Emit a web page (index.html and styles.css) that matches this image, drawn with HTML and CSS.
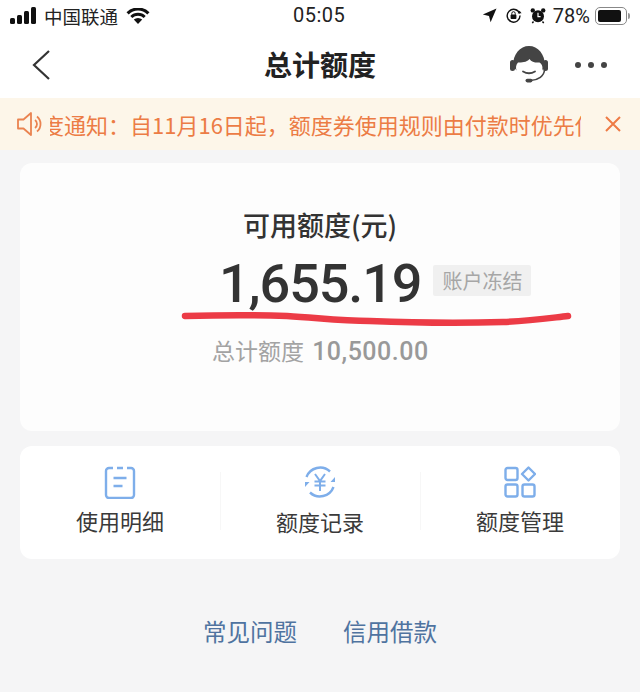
FILE: index.html
```html
<!DOCTYPE html>
<html lang="zh-CN">
<head>
  <meta charset="UTF-8">
  <title>总计额度</title>
  <link rel="stylesheet" href="styles.css">
</head>
<body>
  <div class="status-bar">
    <div class="status-left">
      <div class="signal"><i></i><i></i><i></i><i></i></div>
      <span>中国联通</span>
      <svg class="wifi" width="24" height="16" viewBox="0 0 24 16">
        <path d="M12 16 7.800 11.600a6 6 0 0 1 8.400 0z" fill="#111"/>
        <path d="M4.300 8a11 11 0 0 1 15.400 0l-2 2.100a8.200 8.200 0 0 0-11.400 0z" fill="#111"/>
        <path d="M.5 4.200a16.400 16.400 0 0 1 23 0l-2.200 2.200a13.300 13.300 0 0 0-18.600 0z" fill="#111"/>
      </svg>
    </div>
    <div class="status-time">05:05</div>
    <div class="status-right">
      <svg width="15" height="15" viewBox="0 0 15 15"><path d="M14.500.5 8.600 14.200 7 8 .8 6.400z" fill="#111"/></svg>
      <svg width="17" height="17" viewBox="0 0 17 17">
        <path d="M14.600 6.500A6.400 6.400 0 1 0 15 8.500" fill="none" stroke="#111" stroke-width="1.400"/>
        <path d="M12.600 6.200h4l-2-2.400z" fill="#111"/>
        <rect x="5.600" y="7.600" width="5.800" height="4.400" rx=".8" fill="#111"/>
        <path d="M6.800 7.800V6.400a1.700 1.700 0 0 1 3.400 0v1.400" fill="none" stroke="#111" stroke-width="1"/>
      </svg>
      <svg width="16" height="17" viewBox="0 0 16 17">
        <circle cx="8" cy="9.300" r="6" fill="#111"/>
        <circle cx="2.800" cy="3.400" r="2.200" fill="#111"/>
        <circle cx="13.200" cy="3.400" r="2.200" fill="#111"/>
        <path d="M8 5.800v3.800h2.600" fill="none" stroke="#fff" stroke-width="1.200"/>
        <path d="m3.500 14.500-1.200 1.600M12.500 14.500l1.200 1.600" stroke="#111" stroke-width="1.500"/>
      </svg>
      <span class="percent">78%</span>
      <div class="battery"><div class="battery-fill"></div></div>
    </div>
  </div>

  <div class="nav-bar">
    <svg class="nav-back" width="20" height="32" viewBox="0 0 20 32">
      <path d="M18 2 3 16l15 14" fill="none" stroke="#333" stroke-width="2.200"/>
    </svg>
    <h1>总计额度</h1>
    <div class="nav-actions">
      <svg width="38" height="38" viewBox="0 0 38 38">
        <path d="M3 20C3 8 10 0 19 0s16 8 16 20l-3 4.500c1-3 .5-6-2.500-8-4 .5-8-.5-10-3.500-3 3.500-8 3.500-11.500 3.500-2 2-2.500 5-1.500 8z" fill="#444"/>
        <rect x="0" y="14" width="5" height="11" rx="2.500" fill="#444"/>
        <rect x="33" y="14" width="5" height="11" rx="2.500" fill="#444"/>
        <path d="M13 25.500q6 3.500 12 0" fill="none" stroke="#444" stroke-width="1.800" stroke-linecap="round"/>
        <path d="M34.500 24c-.5 6-6 10-14 10.500" fill="none" stroke="#444" stroke-width="1.600"/>
        <rect x="15.500" y="32.800" width="7" height="3.600" rx="1.800" fill="#444"/>
      </svg>
      <div class="dots"><i></i><i></i><i></i></div>
    </div>
  </div>

  <div class="notice">
    <svg class="notice-icon" width="28" height="28" viewBox="0 0 28 28" fill="none" stroke="#ea8350" stroke-width="1.800">
      <path d="M2 9.500h5.500L15 3v22l-7.500-6.500H2z" stroke-linejoin="round"/>
      <path d="M19 10a5 5 0 0 1 0 8M21 6.500a9.500 9.500 0 0 1 3.500 7.500 9.500 9.500 0 0 1-3.500 7.500"/>
    </svg>
    <div class="notice-clip">
      <div class="notice-text">额度通知：自11月16日起，额度券使用规则由付款时优先使用</div>
    </div>
    <svg class="notice-close" width="18" height="18" viewBox="0 0 18 18">
      <path d="m2 2 14 14M16 2 2 16" stroke="#ee7b45" stroke-width="2"/>
    </svg>
  </div>

  <div class="main">
    <section class="card quota-card">
      <div class="quota-inner">
        <div class="quota-title">可用额度(元)</div>
        <div class="quota-row">
          <span class="quota-amount">1,655.19</span>
          <span class="quota-tag">账户冻结</span>
        </div>
        <div class="quota-total">总计额度 <b>10,500.00</b></div>
      </div>
      <svg class="red-mark" width="394" height="20" viewBox="0 0 394 20">
        <path d="M5 9C40 8 80 8 107 9c33 2 53 5 83 5 50 2 100 2 133 1 27-1 47-4 65-6" fill="none" stroke="#ec3b46" stroke-width="6.500" stroke-linecap="round"/>
      </svg>
    </section>

    <section class="card menu-card">
      <div class="menu-item">
        <svg width="32" height="34" viewBox="0 0 32 34" fill="none" stroke="#7eaeea" stroke-width="2.400">
          <path d="M9 3H5a3 3 0 0 0-3 3v24a3 3 0 0 0 3 3h22a3 3 0 0 0 3-3V6a3 3 0 0 0-3-3h-4M13 3h6"/>
          <path d="M9.500 13h13M9.500 21h9"/>
        </svg>
        <span>使用明细</span>
      </div>
      <div class="menu-item">
        <svg width="34" height="34" viewBox="0 0 34 34" fill="none" stroke="#7eaeea" stroke-width="2.400">
          <path d="M3.500 12A14.500 14.500 0 0 1 27 6.500M30.500 22A14.500 14.500 0 0 1 7 27.500"/>
          <path d="M2 17h4.500L2 22zM32 17h-4.500L32 12z" fill="#7eaeea" stroke="none"/>
          <path d="m12 9 5 7 5-7M11.500 16.500h11M11.500 20.500h11M17 16v10" stroke-width="2"/>
        </svg>
        <span class="menu-low">额度记录</span>
      </div>
      <div class="menu-item">
        <svg width="32" height="32" viewBox="0 0 32 32" fill="none" stroke="#7eaeea" stroke-width="2.400">
          <rect x="1.500" y="2" width="12" height="12" rx="2"/>
          <path d="m24.500 1.500 6.500 6.500-6.500 6.500L18 8z" stroke-linejoin="round"/>
          <rect x="1.500" y="18.500" width="12" height="12" rx="2"/>
          <rect x="18.500" y="18.500" width="12" height="12" rx="2"/>
        </svg>
        <span>额度管理</span>
      </div>
    </section>

    <div class="links">
      <a href="#">常见问题</a>
      <a href="#">信用借款</a>
    </div>
  </div>
</body>
</html>
```

FILE: styles.css
```css
* {
  box-sizing: border-box;
}

html,
body {
  height: 100%;
}

body {
  margin: 0;
  background: #f5f5f6;
  font-family: "Noto Sans CJK SC", "Noto Sans", sans-serif;
  overflow: hidden;
}

.status-bar {
  height: 31px;
  background: #fff;
  padding: 0 9px 0 10px;
  display: flex;
  align-items: center;
  justify-content: space-between;
  position: relative;
  font-size: 18.500px;
  color: #222;
}

.status-left {
  display: flex;
  align-items: center;
  gap: 8px;
}

.status-left span {
  line-height: 30px;
}

.signal {
  display: flex;
  align-items: flex-end;
  gap: 2px;
  height: 17px;
}

.signal i {
  width: 5px;
  background: #111;
  border-radius: 1.500px;
}

.signal i:nth-child(1) { height: 6px; }
.signal i:nth-child(2) { height: 9px; }
.signal i:nth-child(3) { height: 13px; }
.signal i:nth-child(4) { height: 17px; }

.status-time {
  position: absolute;
  left: 293px;
  top: 0;
  line-height: 31px;
  font-family: "Roboto", sans-serif;
  font-size: 20px;
  letter-spacing: 0.500px;
  color: #222;
}

.status-right {
  display: flex;
  align-items: center;
  gap: 8px;
}

.percent {
  font-family: "Roboto", sans-serif;
  font-size: 20px;
  margin-left: -1px;
  margin-right: -3px;
}

.battery {
  width: 32px;
  height: 18px;
  margin-right: 4px;
  border: 1px solid #888;
  border-radius: 5px;
  padding: 2px;
  position: relative;
}

.battery::after {
  content: "";
  position: absolute;
  right: -4px;
  top: 5px;
  width: 2px;
  height: 6px;
  background: #999;
  border-radius: 0 2px 2px 0;
}

.battery-fill {
  width: 23px;
  height: 100%;
  background: #111;
  border-radius: 2px;
}

.nav-bar {
  height: 67px;
  background: #fff;
  display: flex;
  align-items: center;
  justify-content: space-between;
  padding: 0 33px 0 31px;
  position: relative;
}

.nav-bar h1 {
  position: absolute;
  left: 0;
  right: 0;
  top: 0;
  margin: 0;
  line-height: 67px;
  text-align: center;
  font-size: 28px;
  font-weight: 700;
  color: #222;
}

.nav-actions {
  display: flex;
  align-items: center;
  gap: 27px;
  position: relative;
}

.dots {
  display: flex;
  gap: 7px;
}

.dots i {
  width: 6px;
  height: 6px;
  border-radius: 50%;
  background: #444;
}

.notice {
  height: 52px;
  background: #fdf6e9;
  display: flex;
  align-items: center;
  padding: 0 16px;
}

.notice-icon {
  flex: none;
}

.notice-clip {
  width: 531px;
  margin-left: 6px;
  overflow: hidden;
  white-space: nowrap;
}

.notice-text {
  margin-left: -30px;
  font-size: 22px;
  line-height: 30px;
  color: #ec7c45;
}

.notice-close {
  flex: none;
  margin-left: 23px;
}

.main {
  padding: 13px 20px 0;
}

.card {
  background: #fff;
  border-radius: 12px;
}

.quota-card {
  height: 268px;
  background: #fdfdfd;
  position: relative;
  padding: 43px 0 0 192px;
}

.quota-inner {
  display: flex;
  flex-direction: column;
}

.quota-title {
  margin-left: 31px;
  font-size: 27px;
  line-height: 38px;
  font-weight: 500;
  color: #333;
}

.quota-row {
  display: flex;
  align-items: center;
  gap: 12px;
  margin-left: 7px;
  margin-top: 8px;
  height: 64px;
}

.quota-amount {
  font-family: "Roboto", sans-serif;
  font-size: 54px;
  font-weight: 500;
  letter-spacing: -1.100px;
  line-height: 64px;
  color: #333;
}

.quota-tag {
  background: #f0f0f0;
  color: #a6a6a6;
  font-size: 20px;
  line-height: 31px;
  padding: 0 9px;
  border-radius: 2px;
  margin-top: -8px;
}

.quota-total {
  margin-top: 17px;
  font-size: 23px;
  line-height: 34px;
  color: #a3a3a3;
}

.quota-total b {
  margin-left: 3px;
  font-family: "Roboto", sans-serif;
  font-size: 25px;
  font-weight: 500;
  color: #999;
  letter-spacing: 0.500px;
}

.red-mark {
  position: absolute;
  left: 160px;
  top: 144px;
}

.menu-card {
  margin-top: 15px;
  height: 113px;
  display: flex;
  padding: 18px 0 0;
}

.menu-item {
  flex: 1;
  height: 78px;
  display: flex;
  flex-direction: column;
  align-items: center;
  gap: 4px;
  font-size: 22px;
  line-height: 32px;
  color: #3a3a3a;
  position: relative;
}

.menu-item + .menu-item::before {
  content: "";
  position: absolute;
  left: 0;
  top: 8px;
  height: 58px;
  border-left: 1px solid #f7f7f7;
}

.menu-item svg {
  height: 36px;
  padding: 1px 0;
  flex: none;
}

.menu-low {
  margin-top: 1px;
}

.links {
  margin-top: 54px;
  display: flex;
  justify-content: center;
  gap: 46px;
}

.links a {
  font-size: 23.500px;
  line-height: 36px;
  color: #4f73a0;
  text-decoration: none;
}
```
